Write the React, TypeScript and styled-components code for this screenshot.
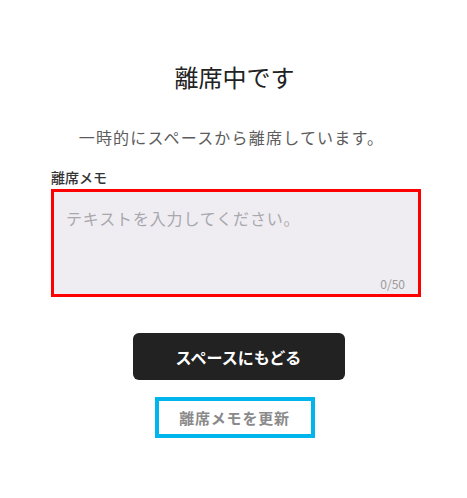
import React, { useState } from 'react'
import styled, { createGlobalStyle } from 'styled-components'

const GlobalStyle = createGlobalStyle`
  html, body {
    margin: 0;
    padding: 0;
    background: #ffffff;
  }
  body {
    font-family: 'Noto Sans CJK JP', 'Noto Sans', sans-serif;
  }
`

const Page = styled.div`
  width: 467px;
  height: 498px;
  display: flex;
  flex-direction: column;
  align-items: center;
  padding-top: 60px;
  box-sizing: border-box;
`

const Title = styled.h1`
  margin: 0;
  font-size: 24px;
  line-height: 34px;
  font-weight: 400;
  color: #222222;
  transform: translateX(1px);
`

const Lead = styled.p`
  margin: 31px 0 0;
  font-size: 16px;
  letter-spacing: 1.2px;
  line-height: 24px;
  color: #5c5c5c;
  transform: translateX(-2px);
`

const Field = styled.div`
  width: 370px;
  margin-top: 19px;
  margin-left: 5px;
  display: flex;
  flex-direction: column;
`

const Label = styled.label`
  font-size: 14px;
  line-height: 18px;
  font-weight: 500;
  color: #333333;
  margin-bottom: 3px;
`

const MemoBox = styled.div`
  position: relative;
  height: 108px;
  box-sizing: border-box;
  border: 3px solid #ff0000;
  background: #efedf2;
`

const MemoInput = styled.textarea`
  width: 100%;
  height: 100%;
  box-sizing: border-box;
  border: none;
  outline: none;
  resize: none;
  background: transparent;
  padding: 14px 12px;
  font-family: inherit;
  font-size: 16px;
  letter-spacing: 0.85px;
  line-height: 24px;
  color: #333333;
  &::placeholder {
    color: #a9a8ad;
  }
`

const Counter = styled.span`
  position: absolute;
  right: 13px;
  bottom: 2px;
  font-size: 12px;
  line-height: 16px;
  color: #9a9a9a;
`

const PrimaryButton = styled.button`
  margin-top: 36px;
  margin-left: 10px;
  width: 212px;
  height: 47px;
  border: none;
  border-radius: 6px;
  background: #222222;
  color: #ffffff;
  font-family: inherit;
  font-size: 16px;
  font-weight: 700;
  cursor: pointer;
`

const SecondaryButton = styled.button`
  margin-top: 17px;
  margin-left: 2px;
  width: 160px;
  height: 41px;
  box-sizing: border-box;
  border: 4px solid #00b4ec;
  background: #ffffff;
  color: #8a8a8a;
  font-family: inherit;
  font-size: 15px;
  letter-spacing: 0.8px;
  font-weight: 700;
  cursor: pointer;
`

const App: React.FC = () => {
  const [memo, setMemo] = useState<string>('')

  return (
    <>
      <GlobalStyle />
      <Page>
        <Title>離席中です</Title>
        <Lead>一時的にスペースから離席しています。</Lead>
        <Field>
          <Label htmlFor="memo">離席メモ</Label>
          <MemoBox>
            <MemoInput
              id="memo"
              maxLength={50}
              value={memo}
              placeholder="テキストを入力してください。"
              onChange={(e) => setMemo(e.target.value)}
            />
            <Counter>{memo.length}/50</Counter>
          </MemoBox>
        </Field>
        <PrimaryButton>スペースにもどる</PrimaryButton>
        <SecondaryButton>離席メモを更新</SecondaryButton>
      </Page>
    </>
  )
}

export default App
